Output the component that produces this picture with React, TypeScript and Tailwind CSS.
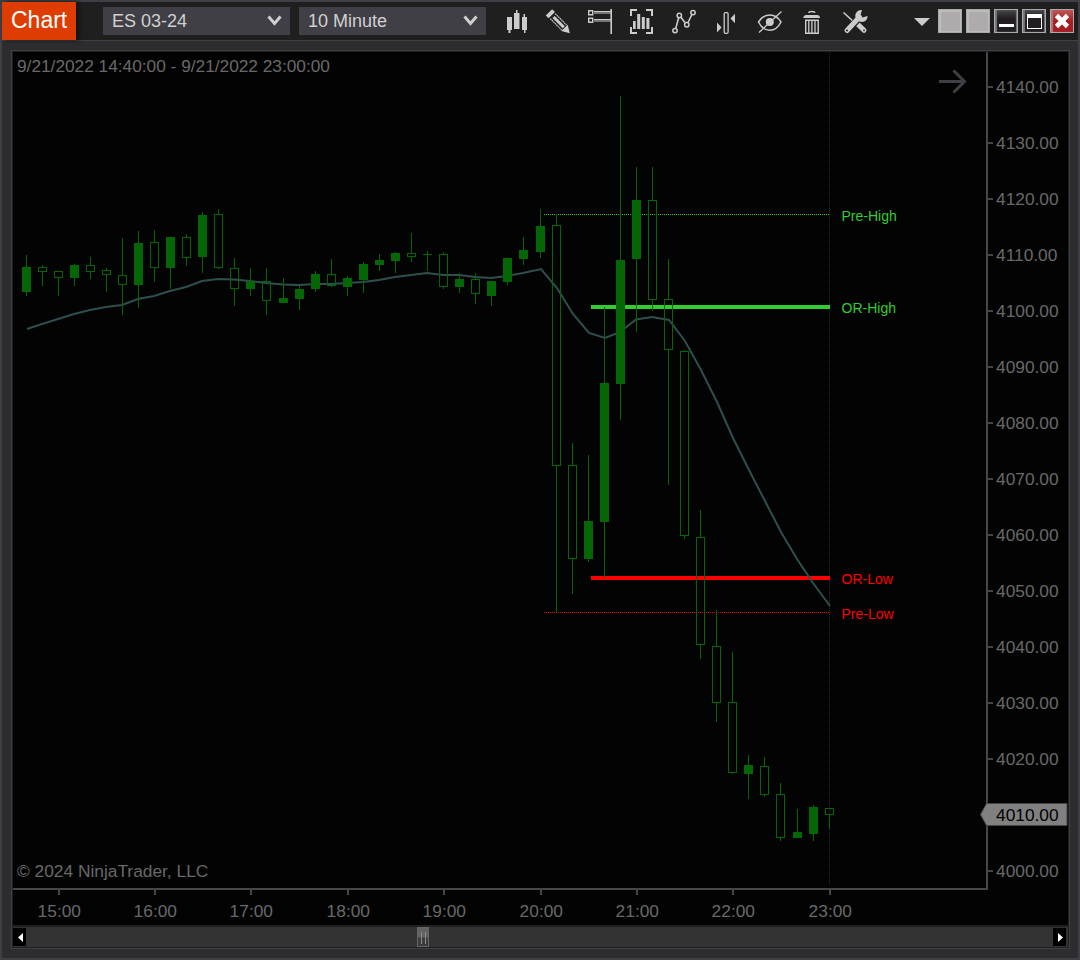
import { ReactNode } from 'react';

type Candle = {
    x: number;
    high: number;
    top: number;
    bottom: number;
    low: number;
    filled: boolean;
};

// x, high, body top, body bottom, low, filled
const rows: number[][] = [
    [26, 255, 267, 292, 296, 1],
    [42, 265, 267, 272, 286, 0],
    [58, 271, 271, 278, 296, 0],
    [74, 264, 265, 278, 286, 1],
    [90, 257, 265, 272, 279, 0],
    [106, 268, 270, 275, 292, 0],
    [122, 238, 275, 285, 315, 0],
    [138, 231, 243, 285, 308, 1],
    [154, 230, 242, 268, 282, 0],
    [170, 237, 237, 268, 289, 1],
    [186, 234, 237, 258, 266, 0],
    [202, 212, 215, 257, 273, 1],
    [218, 209, 214, 268, 269, 0],
    [234, 258, 268, 289, 306, 0],
    [250, 268, 281, 289, 296, 1],
    [266, 268, 281, 301, 315, 0],
    [283, 278, 298, 303, 303, 1],
    [299, 286, 289, 299, 310, 1],
    [315, 271, 274, 289, 292, 1],
    [331, 259, 274, 286, 287, 0],
    [347, 276, 278, 287, 296, 1],
    [363, 262, 264, 280, 293, 1],
    [379, 254, 260, 265, 271, 1],
    [395, 252, 253, 261, 273, 1],
    [411, 233, 253, 257, 262, 0],
    [427, 251, 254, 255, 271, 1],
    [443, 252, 254, 287, 289, 0],
    [459, 273, 279, 287, 293, 1],
    [475, 273, 279, 294, 304, 0],
    [491, 281, 281, 296, 306, 1],
    [507, 258, 258, 282, 285, 1],
    [523, 237, 250, 259, 265, 1],
    [540, 209, 226, 252, 258, 1],
    [556, 214, 225, 466, 613, 0],
    [572, 443, 465, 559, 594, 0],
    [588, 455, 521, 559, 562, 1],
    [604, 307, 383, 522, 578, 1],
    [620, 96, 260, 384, 420, 1],
    [636, 167, 200, 259, 332, 1],
    [652, 167, 200, 300, 311, 0],
    [668, 259, 299, 350, 485, 0],
    [684, 350, 351, 536, 539, 0],
    [700, 510, 537, 645, 659, 0],
    [716, 610, 646, 703, 722, 0],
    [732, 652, 702, 773, 774, 0],
    [748, 755, 765, 774, 799, 1],
    [764, 757, 766, 795, 797, 0],
    [780, 783, 794, 838, 841, 0],
    [797, 809, 832, 838, 838, 1],
    [813, 805, 807, 834, 841, 1],
    [829, 808, 808, 815, 829, 0],
];

const candles: Candle[] = rows.map(([x, high, top, bottom, low, filled]) => ({ x, high, top, bottom, low, filled: filled === 1 }));

const average =
    '27,329 42,324 58,319 74,314 90,310 106,307 122,305 138,299 154,296 170,291 186,287 202,281 218,279 234,279.5 250,281 266,283 283,284.5 299,285 315,284 331,284 347,283 363,282 379,280 395,277 411,275 427,273 443,275 459,275 475,277 491,278 507,276 523,273 541,269 557,288 573,314 589,333 605,338 620,332 636,319.5 652,317 669,320 685,341 701,370 717,402 733,438 749,470 765,501 781,532 797,559 813,583 830,606';

const prices = Array.from({ length: 15 }, (_, i) => ({ label: `${4140 - i * 10}.00`, y: 87 + i * 56 }));

const times = [
    { label: '15:00', x: 59 },
    { label: '16:00', x: 155 },
    { label: '17:00', x: 251 },
    { label: '18:00', x: 348 },
    { label: '19:00', x: 444 },
    { label: '20:00', x: 541 },
    { label: '21:00', x: 637 },
    { label: '22:00', x: 733 },
    { label: '23:00', x: 830 },
];

function CandleShape({ x, high, top, bottom, low, filled }: Candle) {
    if (filled) {
        return (
            <g fill="#056605">
                <rect x={x} y={high} width={1} height={low - high} />
                <rect x={x - 4} y={top} width={9} height={bottom - top} />
            </g>
        );
    }
    return (
        <g fill="#056605">
            <rect x={x} y={high} width={1} height={top - high} />
            <rect x={x} y={bottom} width={1} height={low - bottom} />
            <rect x={x - 3.5} y={top + 0.5} width={8} height={bottom - top - 1} fill="none" stroke="#056605" />
        </g>
    );
}

function PriceChart() {
    return (
        <svg width={1055} height={873} viewBox="13 52 1055 873" shapeRendering="crispEdges" className="block font-['Liberation_Sans',Arial,sans-serif]">
            {/* Session line */}
            <path d="M829.5 52V886" stroke="#2c2c2c" strokeDasharray="1 1" />

            {/* Levels */}
            <path d="M544 214.5H830" stroke="#32cd32" strokeDasharray="1 1" />
            <rect x={591} y={305} width={239} height={4} fill="#32cd32" />
            <rect x={591} y={576} width={239} height={4} fill="#ff0000" />
            <path d="M544 612.5H830" stroke="#ff0000" strokeDasharray="1 1" />

            <polyline points={average} fill="none" stroke="#2f4f4f" strokeWidth={2} shapeRendering="auto" />

            {candles.map((c) => (
                <CandleShape key={c.x} {...c} />
            ))}

            <g fontSize={14}>
                <text x={841.5} y={221} fill="#32cd32">Pre-High</text>
                <text x={841.5} y={313} fill="#32cd32">OR-High</text>
                <text x={841.5} y={584} fill="#ff0000">OR-Low</text>
                <text x={841.5} y={619} fill="#ff0000">Pre-Low</text>
            </g>

            <path d="M939 81.5H964M953.500 70.500L964.500 81.500L953.500 92.500" fill="none" stroke="#403f45" strokeWidth={3} shapeRendering="auto" />

            {/* Axes */}
            <g fill="#47464b">
                <rect x={986} y={52} width={2} height={838} />
                <rect x={13} y={888} width={975} height={2} />
                {prices.map((p) => (
                    <rect key={p.label} x={988} y={p.y - 1} width={5} height={2} />
                ))}
                {times.map((t) => (
                    <rect key={t.label} x={t.x - 1} y={890} width={2} height={5} />
                ))}
            </g>
            <g fill="#696969" fontSize={17.33}>
                <text x={17} y={72} textLength={313}>9/21/2022 14:40:00 - 9/21/2022 23:00:00</text>
                <text x={17} y={877}>© 2024 NinjaTrader, LLC</text>
                {prices
                    .filter((p) => p.label !== '4010.00')
                    .map((p) => (
                        <text key={p.label} x={996} y={p.y + 6}>
                            {p.label}
                        </text>
                    ))}
                {times.map((t) => (
                    <text key={t.label} x={t.x + 0.3} y={917} textAnchor="middle">
                        {t.label}
                    </text>
                ))}
            </g>

            {/* Last price */}
            <path d="M980.5 814.5L986.5 803.5H1067V825.5H986.5Z" fill="#808080" stroke="#47464b" shapeRendering="auto" />
            <text x={996} y={821} fontSize={17.33} fill="#000000">4010.00</text>
        </svg>
    );
}

function Select({ children }: { children: ReactNode }) {
    return (
        <div className="flex h-7 w-[187px] items-center justify-between bg-[#403f45] pr-2 pl-[9px] text-[18px] text-[#d0d0d0]">
            <span>{children}</span>
            <svg width={15} height={12} viewBox="0 0 15 12" fill="none" stroke="#cfcfcf" strokeWidth={3}>
                <path d="M1.500 1.500L7.500 8.500L13.500 1.500" />
            </svg>
        </div>
    );
}

// Toolbar glyphs share one 370x32 strip that starts at x=500, y=4
function ToolIcons() {
    return (
        <svg width={370} height={32} viewBox="500 4 370 32" fill="none" stroke="#cccccc">
            {/* Bars */}
            <g fill="#cccccc" stroke="none">
                <path d="M507 16h5v13h-1.500v3h-2v-3h-1.500zM514 12h2v-3h1.500v3h2v16H514zM522 16h1.500v-3h1.500v3h2v13h-1.500v3h-1.500v-3H522z" />
            </g>

            {/* Pencil */}
            <g transform="translate(549.300 11.700) rotate(45)">
                <path d="M-.500 -4.500h4v9H-.500z" fill="#cccccc" stroke="none" />
                <path d="M5 -3.500H21M5 3.500H21" strokeWidth={1.2} strokeDasharray="1.500 .6" />
                <path d="M6 0H20.500" strokeWidth={3} />
                <path d="M21.500 -4.500L29 0L21.500 4.500Z" fill="#cccccc" stroke="none" />
            </g>

            {/* Order panel */}
            <path d="M588.700 9.700h4v4h-4zM588.700 17.200h4v4h-4z" strokeWidth={1.4} />
            <path d="M594 10.500H611M594 12H611M594 18.500H611M594 20H611" strokeWidth={1} />
            <path d="M611.200 8V33" strokeWidth={1.6} />

            {/* Indicators */}
            <path d="M637 9h-6v6M646 9h6v6M637 32h-6v-6M646 32h6v-6" strokeWidth={2} />
            <path d="M633 20h2.700v8H633zM637.200 13h3v15h-3zM641.800 16h3v12h-3zM646.400 17h3v11h-3z" fill="#cccccc" stroke="none" />

            {/* Drawing path */}
            <path d="M675.800 27.300L678.600 17M681 16.300L685 21.800M688 21.500L691.700 14" strokeWidth={1.6} />
            <g strokeWidth={1.5}>
                <circle cx={675} cy={29.6} r={2.2} />
                <circle cx={679.3} cy={14.5} r={2.2} />
                <circle cx={686.8} cy={23.8} r={2.2} />
                <circle cx={693} cy={11.6} r={2.2} />
            </g>

            {/* Bar spacing */}
            <rect x={724.2} y={11.7} width={3.9} height={20.6} rx={1.2} strokeWidth={1.3} />
            <path d="M717 21.500L721.500 26.500L717 31.500ZM735 12.700L730.500 17.500L735 22.300Z" fill="#cccccc" stroke="none" />

            {/* Hidden eye */}
            <path d="M758.500 21C764 11.500 775.500 11.500 781 21C775.500 32 764 32 758.500 21Z" strokeWidth={1.5} />
            <circle cx={769.8} cy={21} r={4} fill="#cccccc" stroke="none" />
            <path d="M759 31.500L781.500 10.500" strokeWidth={1.3} />

            {/* Trash */}
            <path d="M808.800 12c0-2 6-2 6 0" strokeWidth={1.4} />
            <path d="M803.300 17c0-2 1.500-3 3-3h10.800c1.500 0 3 1 3 3z" fill="#cccccc" stroke="none" />
            <path d="M805.700 19.200h12.500v13h-12.500z" strokeWidth={1.4} />
            <path d="M808.800 19v13M811.900 19v13M815 19v13" strokeWidth={1.3} />

            {/* Wrench and screwdriver */}
            <path d="M843.500 11.500L854.500 21.500" strokeWidth={1.6} />
            <path d="M857.500 23L864 29.300" strokeWidth={5} strokeLinecap="round" />
            <path d="M849 28L860 16" stroke="#1f1f1f" strokeWidth={7} />
            <path d="M847 29.500L859.500 16" strokeWidth={5} strokeLinecap="round" />
            <path d="M862 9l-1.500 5 2 2.500 5-1.500c.3 4-3.500 7-8 5.500l-4-4c-1-4.500 2.500-8 6.500-7.500z" fill="#cccccc" stroke="none" />
            <circle cx={847} cy={29.5} r={1} fill="#1f1f1f" stroke="none" />
            <circle cx={864} cy={29.3} r={0.9} fill="#1f1f1f" stroke="none" />
        </svg>
    );
}

function WindowButton({ className, children }: { className: string; children?: ReactNode }) {
    return <div className={`flex size-6 border border-[#a9a9ac] ${className}`}>{children}</div>;
}

function Toolbar() {
    return (
        <div className="flex h-[39px] items-center border-b border-[#3f3f46] bg-[#1f1f1f]">
            <div className="flex h-full w-[74px] items-center bg-[#de3c00] pb-0.5 pl-[9px] text-[23px] text-white shadow-[3px_0_4px_#111111]">Chart</div>
            <div className="ml-[27px] flex gap-[9px]">
                <Select>ES 03-24</Select>
                <Select>10 Minute</Select>
            </div>
            <div className="ml-[14px]">
                <ToolIcons />
            </div>
            <svg width={16} height={8} viewBox="0 0 16 8" className="mt-0.5 ml-11">
                <path d="M0 0H16L8 8Z" fill="#cccccc" />
            </svg>
            <div className="ml-2 flex gap-1">
                <WindowButton className="bg-[#afabad] shadow-[inset_2px_2px_1px_#bdbdbf,inset_-1px_-1px_1px_#bdbdbf]" />
                <WindowButton className="bg-[#afabad] shadow-[inset_2px_2px_1px_#bdbdbf,inset_-1px_-1px_1px_#bdbdbf]" />
                <WindowButton className="items-end justify-center bg-linear-to-b from-[#48474b] via-[#211d20] via-40% to-[#211d20] pb-[5px] shadow-[inset_2px_0_1px_#77797c,inset_-1px_0_1px_#77797c]">
                    <div className="h-[3px] w-[15px] bg-white" />
                </WindowButton>
                <WindowButton className="items-center justify-center bg-linear-to-b from-[#48474b] via-[#211d20] via-40% to-[#211d20] shadow-[inset_2px_0_1px_#77797c,inset_-1px_0_1px_#77797c]">
                    <div className="h-[15px] w-[15px] border border-t-[4px] border-white" />
                </WindowButton>
                <WindowButton className="items-center justify-center bg-linear-to-b from-[#bd5558] via-[#a61e21] via-50% to-[#a61e21] shadow-[inset_2px_0_1px_#b07577]">
                    <svg width={16} height={16} viewBox="0 0 16 16" stroke="#ffffff" strokeWidth={4.6}>
                        <path d="M2.500 2.500L13.500 13.500M13.500 2.500L2.500 13.500" />
                    </svg>
                </WindowButton>
            </div>
        </div>
    );
}

function ScrollBar() {
    return (
        <div className="flex h-5 items-center bg-[#333333]">
            <div className="flex h-[18px] w-[13px] items-center justify-center bg-black pl-0.5">
                <svg width={5} height={9} viewBox="0 0 5 9">
                    <path d="M5 0V9L0 4.500Z" fill="#ffffff" />
                </svg>
            </div>
            <div className="ml-[391px] flex h-5 w-3 items-center justify-center gap-[3px] border border-[#666666] bg-linear-to-b from-[#626262] from-50% to-[#3c3c3c] to-55%">
                <div className="mt-0.5 h-3 w-px bg-[#8a8a8a]" />
                <div className="mt-0.5 h-3 w-px bg-[#8a8a8a]" />
            </div>
            <div className="mr-0.5 ml-auto flex h-[18px] w-[13px] items-center justify-center bg-black pl-0.5">
                <svg width={5} height={9} viewBox="0 0 5 9">
                    <path d="M0 0V9L5 4.500Z" fill="#ffffff" />
                </svg>
            </div>
        </div>
    );
}

export default function App() {
    return (
        <div className="flex h-[960px] w-[1080px] flex-col border-2 border-[#403f45] bg-[#2d2d30] font-['Liberation_Sans',Arial,sans-serif] leading-none">
            <Toolbar />

            <div className="mt-[9px] ml-[9px] h-[899px] w-[1059px] border border-[#3f3f46] bg-[#1f1f1f] p-px">
                <div className="h-[873px] bg-[#030303]">
                    <PriceChart />
                </div>
                <div className="mt-0.5">
                    <ScrollBar />
                </div>
            </div>
        </div>
    );
}
